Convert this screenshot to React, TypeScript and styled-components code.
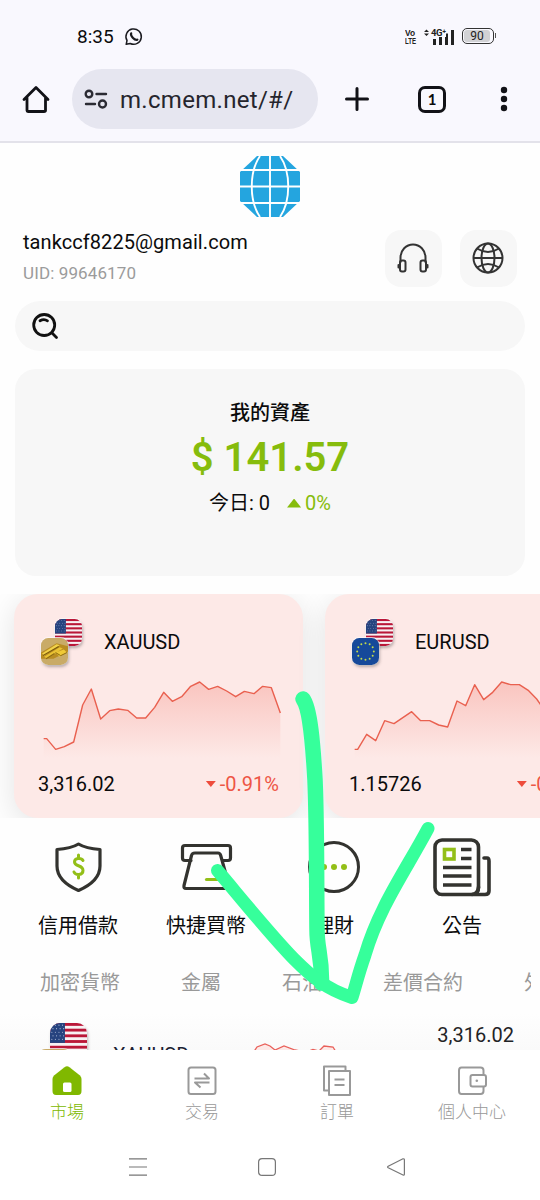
import React from "react";
import styled, { createGlobalStyle } from "styled-components";

const GlobalStyle = createGlobalStyle`
  * { box-sizing: border-box; }
  body {
    margin: 0;
    background: #fefefe;
    font-family: Roboto, "Noto Sans CJK TC", sans-serif;
    color: #0b0b0c;
  }
  svg { display: block; flex: none; overflow: visible; }
`;

const Screen = styled.div`
  position: relative;
  width: 540px;
  height: 1200px;
  overflow: hidden;
  display: flex;
  flex-direction: column;
  background: #fefefe;
`;

const BrowserChrome = styled.header`
  height: 143px;
  flex: none;
  background: #f9f8fe;
  border-bottom: 2px solid #e3e2ea;
`;

const StatusBar = styled.div`
  height: 69px;
  padding: 4px 46px 0 77px;
  display: flex;
  align-items: center;
`;

const Clock = styled.span`
  font-size: 19px;
  line-height: 24px;
  letter-spacing: 0;
  width: 48px;
`;

const StatusIcons = styled.div`
  margin-left: auto;
  display: flex;
  align-items: center;
`;

const Volte = styled.div`
  font: 700 9.5px/8px "Liberation Sans", sans-serif;
  width: 19px;
  text-align: left;
  color: #222;
  span { display: block; transform-origin: left; }
  span:first-child { transform: scaleX(0.88); }
  span:last-child { transform: scaleX(0.64); }
`;

const Signal = styled.div`
  display: flex;
  align-items: flex-start;
  width: 38px;
  position: relative;
`;

const NetworkType = styled.span`
  position: absolute;
  left: 7px;
  top: -1px;
  font: 700 9.5px/9px Roboto, sans-serif;
  background: #f9f8fe;
  color: #222;
  letter-spacing: -0.4px;
`;

const Battery = styled.div`
  width: 32px;
  height: 16px;
  border: 1.4px solid #333;
  border-radius: 5px;
  padding: 1px 3px 1px 1px;
  display: flex;
  position: relative;
  top: -1px;
  &::after {
    content: "";
    position: absolute;
    right: -3px;
    top: 4px;
    width: 1.5px;
    height: 5px;
    background: #555;
  }
`;

const BatteryLevel = styled.span`
  flex: 1;
  border-radius: 3px;
  background: #d2d2d5;
  font-size: 12px;
  line-height: 13px;
  text-align: center;
  color: #222;
`;

const Toolbar = styled.div`
  display: flex;
  align-items: center;
  height: 60px;
  padding-left: 22px;
`;

const AddressPill = styled.div`
  margin-left: 22px;
  width: 246px;
  height: 60px;
  border-radius: 30px;
  background: #e6e6f0;
  display: flex;
  align-items: center;
  padding-left: 12px;
`;

const Address = styled.span`
  margin-left: 12px;
  font-size: 24px;
  line-height: 30px;
  letter-spacing: 0.3px;
  color: #25252d;
  white-space: nowrap;
  padding-top: 2px;
`;

const PlusSlot = styled.div` margin-left: 27px; `;
const TabCount = styled.div`
  margin-left: 49px;
  width: 28px;
  height: 27px;
  border: 3px solid #121217;
  border-radius: 7px;
  display: flex;
  align-items: center;
  justify-content: center;
  font: 700 15px/20px Lato, sans-serif;
`;
const MenuSlot = styled.div` margin-left: 54px; `;

const LogoRow = styled.div`
  height: 87px;
  padding-top: 13px;
  display: flex;
  justify-content: center;
  flex: none;
`;

const Profile = styled.div`
  display: flex;
  height: 57px;
  flex: none;
  padding: 0 23px;
  gap: 18px;
`;

const Identity = styled.div`
  flex: 1;
  min-width: 0;
`;
const Email = styled.div`
  font-size: 20px;
  line-height: 24px;
  letter-spacing: 0.07px;
`;
const Uid = styled.div`
  margin-top: 8px;
  font-size: 17px;
  line-height: 22px;
  letter-spacing: 0.12px;
  color: #9b9b9b;
`;

const RoundButton = styled.button`
  border: 0;
  padding: 0 1px 1px 0;
  width: 57px;
  height: 57px;
  border-radius: 16px;
  background: #f7f7f7;
  display: flex;
  align-items: center;
  justify-content: center;
`;

const SearchBar = styled.div`
  margin: 14px 15px 0;
  height: 50px;
  flex: none;
  border-radius: 25px;
  background: #f7f7f7;
  display: flex;
  align-items: center;
  padding: 0 0 1px 17px;
`;

const AssetCard = styled.section`
  margin: 18px 15px 0;
  height: 207px;
  flex: none;
  border-radius: 21px;
  background: #f7f7f7;
  padding-top: 32px;
  text-align: center;
`;
const AssetTitle = styled.div`
  font-size: 20px;
  line-height: 24px;
  font-weight: 500;
`;
const AssetValue = styled.div`
  font-size: 40px;
  line-height: 50px;
  margin-top: 8px;
  font-weight: 600;
  color: #86bc0c;
`;
const AssetChange = styled.div`
  display: flex;
  justify-content: center;
  align-items: center;
  margin-top: 7px;
  font-size: 20px;
  line-height: 26px;
`;
const Triangle = styled.i<{ $down?: boolean; $w: number }>`
  width: ${(p) => p.$w}px;
  height: ${(p) => (p.$down ? 6 : 9)}px;
  background: ${(p) => (p.$down ? "#ee4c3c" : "#86bc0c")};
  clip-path: ${(p) => (p.$down ? "polygon(0 0, 100% 0, 50% 100%)" : "polygon(50% 0, 100% 100%, 0 100%)")};
`;
const Gain = styled.span`
  display: flex;
  align-items: center;
  gap: 4px;
  margin-left: 17px;
  color: #86bc0c;
`;

const Carousel = styled.div`
  margin-top: 18px;
  height: 224px;
  flex: none;
  display: flex;
  gap: 22px;
  padding-left: 14px;
  overflow: hidden;
`;

const QuoteCard = styled.article`
  width: 289px;
  height: 224px;
  flex: none;
  border-radius: 24px;
  background: #fde9e7;
  box-shadow: 0 6px 30px rgba(0, 0, 0, 0.11);
  padding: 25px 24px 0 24px;
`;
const QuoteHead = styled.div`
  display: flex;
  align-items: center;
  height: 46px;
  padding-left: 3px;
`;
const PairIcon = styled.div<{ $size: number; $drop: number }>`
  position: relative;
  flex: none;
  width: ${(p) => p.$size + 14}px;
  height: ${(p) => p.$size + p.$drop}px;
`;
const Badge = styled.div<{ $size: number; $front?: boolean }>`
  position: absolute;
  ${(p) => (p.$front ? "left: 0; bottom: 0;" : "right: 0; top: 0;")}
  width: ${(p) => p.$size}px;
  height: ${(p) => p.$size}px;
  border-radius: ${(p) => p.$size * 0.27}px;
  overflow: hidden;
  box-shadow: 1px 2px 3px rgba(60, 50, 50, 0.35), 0 0 0 1px rgba(255, 255, 255, 0.65);
`;
const Symbol = styled.span`
  font-size: 20px;
  line-height: 24px;
  margin-left: 22px;
`;
const ChartSlot = styled.div`
  height: 80px;
  margin: 15px 0 0 2px;
`;
const QuoteFoot = styled.div`
  display: flex;
  justify-content: space-between;
  margin-top: 12px;
  font-size: 20px;
  line-height: 24px;
`;
const Loss = styled.span`
  display: flex;
  align-items: center;
  gap: 4px;
  color: #ee5545;
`;

const Shortcuts = styled.div`
  display: grid;
  grid-template-columns: repeat(4, 128px);
  padding: 17px 14px 0;
  height: 122px;
  flex: none;
`;
const Shortcut = styled.div`
  display: flex;
  flex-direction: column;
  align-items: center;
  font-size: 20px;
  line-height: 26px;
`;
const ShortcutIcon = styled.div`
  height: 64px;
  margin-bottom: 14px;
  display: flex;
  align-items: center;
`;

const Categories = styled.div`
  display: flex;
  gap: 61px;
  margin: 0 9px 0 40px;
  padding-top: 29px;
  height: 73px;
  flex: none;
  overflow: hidden;
  color: #999;
  font-size: 20px;
  line-height: 28px;
  white-space: nowrap;
`;

const MarketRow = styled.div`
  height: 37px;
  flex: none;
  overflow: hidden;
  display: flex;
  align-items: flex-start;
  padding: 10px 26px 0 36px;
  background: linear-gradient(#fefefe, #fafafa);
`;
const RowSymbol = styled.span`
  margin: 20px 0 0 26px;
  font-size: 20px;
  line-height: 24px;
  width: 140px;
  color: #1c2233;
`;
const RowPrice = styled.span`
  margin-left: auto;
  font-size: 20px;
  line-height: 24px;
  color: #1f2326;
`;
const Sparkline = styled.div` padding-top: 20px; `;

const BottomNav = styled.nav`
  display: grid;
  grid-template-columns: repeat(4, 135px);
  height: 84px;
  flex: none;
  padding-top: 15px;
  background: #fff;
`;
const NavItem = styled.div<{ $active?: boolean }>`
  display: flex;
  flex-direction: column;
  align-items: center;
  gap: 3px;
  font-size: 17px;
  line-height: 24px;
  font-weight: 300;
  padding-right: 1px;
  color: ${(p) => (p.$active ? "#80b800" : "#999")};
`;

const SystemNav = styled.div`
  flex: 1;
  display: flex;
  align-items: center;
  padding-left: 129px;
  gap: 111px;
  background: #fff;
`;

const ArrowOverlay = styled.div`
  position: absolute;
  inset: 0;
  pointer-events: none;
`;

const UsFlag = () => (
  <svg width="100%" height="100%" viewBox="0 0 26 26" preserveAspectRatio="none">
    <rect width="26" height="26" fill="#f7f1f3" />
    {[0, 4, 8, 12, 16, 20, 24].map((y) => (
      <rect key={y} y={y} width="26" height="2" fill="#ba1738" />
    ))}
    <rect width="10.5" height="14" fill="#26437f" />
    {[1.5, 4, 6.5, 9, 11.5].map((y, r) =>
      [1.5, 4, 6.5, 9].map((x) => (
        <circle key={`${x}-${y}`} cx={x + (r % 2 ? 0.6 : -0.2)} cy={y} r=".4" fill="#aebbd6" />
      ))
    )}
  </svg>
);

const EuFlag = () => (
  <svg width="100%" height="100%" viewBox="0 0 26 26">
    <rect width="26" height="26" fill="#16499a" />
    {Array.from({ length: 12 }, (_, i) => {
      const a = (i * Math.PI) / 6;
      return <circle key={i} cx={13 + 8 * Math.sin(a)} cy={13 - 8 * Math.cos(a)} r=".95" fill="#c4db4a" />;
    })}
  </svg>
);

const GoldBars = () => (
  <svg width="100%" height="100%" viewBox="0 0 26 26">
    <rect width="26" height="26" fill="#c9ab67" />
    <path d="M0 14L15 5l11 3v5L12 20H0z" fill="#b98d22" />
    <path d="M1 15L15 6l3 1L3 17z" fill="#f2d24a" />
    <path d="M3 18l15-9 3 1-15 10z" fill="#e9c233" />
    <path d="M2 16.8l15-8.6" stroke="#7b5a0b" strokeWidth="1" />
    <path d="M14 14l8-3 3 3-7 4z" fill="#efc936" />
    <path d="M14 14l5 3 6-3" stroke="#87650e" strokeWidth=".9" fill="none" />
    <path d="M5 20l8-5" stroke="#8b6913" strokeWidth="1.1" />
  </svg>
);

const Pair = ({ size, drop, front }: { size: number; drop: number; front: React.ReactNode }) => (
  <PairIcon $size={size} $drop={drop}>
    <Badge $size={size}><UsFlag /></Badge>
    <Badge $size={size} $front>{front}</Badge>
  </PairIcon>
);

type Quote = {
  symbol: string;
  price: string;
  change: string;
  points: string;
  originX: number;
  icon: React.ReactNode;
};

const quotes: Quote[] = [
  {
    symbol: "XAUUSD",
    price: "3,316.02",
    change: "-0.91%",
    originX: 120,
    icon: <GoldBars />,
    points:
      "131,461 140,461 167,493 193,485 221,471 248,360 274,312 302,402 329,377 355,372 383,376 410,399 437,399 464,367 491,322 517,349 545,335 572,304 599,291 626,313 653,304 680,318 707,335 733,319 762,326 788,304 814,308 841,384",
  },
  {
    symbol: "EURUSD",
    price: "1.15726",
    change: "-0.12%",
    originX: 183,
    icon: <EuFlag />,
    points:
      "194,493 203,493 230,448 257,467 284,407 312,416 365,380 392,407 419,407 446,420 473,426 501,348 527,362 554,299 581,344 608,322 635,291 662,299 688,299 716,317 740,342 765,378 800,390 850,400 904,420",
  },
];

const PriceChart = ({ points, originX }: { points: string; originX: number }) => {
  const list = points.split(" ");
  const first = list[0].split(",")[0];
  const last = list[list.length - 1].split(",")[0];
  const id = `fade-${originX}`;
  return (
    <svg width="248" height="80" viewBox={`${originX} 285 744 240`}>
      <defs>
        <linearGradient id={id} x1="0" y1="0" x2="0" y2="1">
          <stop offset="0" stopColor="#ef5848" stopOpacity=".25" />
          <stop offset="1" stopColor="#ef5848" stopOpacity="0" />
        </linearGradient>
      </defs>
      <polygon points={`${first},520 ${points} ${last},520`} fill={`url(#${id})`} />
      <polyline points={points} fill="none" stroke="#e9604f" strokeWidth="4.2" strokeLinejoin="round" />
    </svg>
  );
};

const GlobeLogo = () => (
  <svg width="60" height="61" viewBox="0 0 60 61">
    <path d="M17 0H43L60 16V45L43 61H17L0 45V16Z" fill="#24a5df" />
    <g fill="none" stroke="#fff" strokeWidth="1.9">
      <path d="M0 14H60M0 30.5H60M0 47H60M30 0V61" />
      <path d="M20 0C9 16 9 45 20 61M40 0C51 16 51 45 40 61" />
    </g>
  </svg>
);

const dark = "#33332f";
const lime = "#93bf18";

const ShieldIcon = () => (
  <svg width="46" height="50" viewBox="0 0 46 50" fill="none" strokeLinecap="round" strokeLinejoin="round">
    <path d="M23.500 2C17 6 10 7 2 7.500V24C2 36 11 43 23.500 48.500C36 43 45 36 45 24V7.500C37 7 30 6 23.500 2Z" stroke={dark} strokeWidth="3.200" />
    <path d="M28 18.500C26.500 15.800 19.500 15.500 19.500 20C19.500 25 28 22.500 28 28.500C28 33.500 20.500 33.500 19 30M23.500 13V16M23.500 33V36" stroke={lime} strokeWidth="3" />
  </svg>
);

const CashIcon = () => (
  <svg width="50" height="46" viewBox="0 0 50 46" fill="none" strokeLinecap="round" strokeLinejoin="round" stroke={dark} strokeWidth="3.200">
    <path d="M10 16.500H4Q1.500 16.500 1.500 14V4Q1.500 1.500 4 1.500H47Q49.500 1.500 49.500 4V14Q49.500 16.500 47 16.500H42" />
    <path d="M14 9H37Q39 9 39.700 11.500L48 41.500Q48.500 44.500 46 44.500H5Q2.500 44.500 3 41.500L10.500 11.500Q11 9 14 9Z" />
    <path d="M25.500 35.500H37" stroke={lime} />
  </svg>
);

const WealthIcon = () => (
  <svg width="52" height="52" viewBox="0 0 52 52">
    <circle cx="26" cy="26" r="24.500" fill="none" stroke={dark} strokeWidth="3" />
    {[16, 26, 36].map((x) => <circle key={x} cx={x} cy="26" r="3" fill={lime} />)}
  </svg>
);

const NewsIcon = () => (
  <svg width="58" height="58" viewBox="0 0 58 58" fill="none" stroke={dark} strokeWidth="3.600" strokeLinecap="round" strokeLinejoin="round">
    <rect x="2" y="2" width="43.500" height="54.500" rx="7" />
    <path d="M51 20H54Q56 20 56 23V53Q56 56.500 52 56.500H39Q45.500 56.500 45.500 49" />
    <rect x="11.500" y="11.500" width="9.500" height="9.500" stroke={lime} strokeLinejoin="miter" />
    <path d="M28 11.500H38.500M28 20.500H38.500M10 29.500H38.500M10 38H38.500M10 47H38.500" strokeLinecap="butt" />
  </svg>
);

const shortcuts = [
  { label: "信用借款", icon: <ShieldIcon /> },
  { label: "快捷買幣", icon: <CashIcon /> },
  { label: "理財", icon: <WealthIcon /> },
  { label: "公告", icon: <NewsIcon /> },
];

const categories = ["加密貨幣", "金屬", "石油", "差價合約", "外匯"];

const navItems = [
  {
    label: "市場",
    icon: (
      <svg width="30" height="32" viewBox="0 0 30 32">
        <path d="M12.500 2.200Q15 .3 17.500 2.200L28 10.500Q29.500 12 29.500 14V26Q29.500 30 26 30H4Q.5 30 .5 26V14Q.5 12 2 10.500Z" fill="#80b800" />
        <rect x="11" y="17.500" width="8.500" height="9.500" rx="1.500" fill="#fff" />
      </svg>
    ),
  },
  {
    label: "交易",
    icon: (
      <svg width="30" height="32" viewBox="0 0 30 32" fill="none" stroke="#999" strokeWidth="2" strokeLinejoin="round">
        <rect x="1.500" y="2.500" width="27" height="26.500" rx="2.500" />
        <path d="M7.500 13.500H22L17 8.500M22.500 17.500H8L13.500 22.500" />
      </svg>
    ),
  },
  {
    label: "訂單",
    icon: (
      <svg width="30" height="32" viewBox="0 0 30 32" fill="none" stroke="#999" strokeWidth="2" strokeLinejoin="round">
        <path d="M6.500 25.500H2V1.500H23.500V6" />
        <rect x="7" y="6" width="21" height="24" />
        <path d="M12.500 14.500H22.500M12.500 20H22.500" />
      </svg>
    ),
  },
  {
    label: "個人中心",
    icon: (
      <svg width="30" height="32" viewBox="0 0 30 32" fill="none" stroke="#999" strokeWidth="2" strokeLinejoin="round">
        <path d="M26.500 10V5.500Q26.500 2.500 23.500 2.500H4.500Q2 2.500 2 5.500V26Q2 29 4.500 29H23.500Q26.500 29 26.500 26V22" />
        <rect x="13.500" y="10" width="15.500" height="11.500" rx="2" />
        <circle cx="19.800" cy="15.700" r="1.300" fill="#999" stroke="none" />
      </svg>
    ),
  },
];

export default function App() {
  return (
    <>
      <GlobalStyle />
      <Screen>
        <BrowserChrome>
          <StatusBar>
            <Clock>8:35</Clock>
            <svg width="18" height="18" viewBox="0 0 18 18" fill="none" stroke="#1b1b20">
              <path d="M1.200 16.300L2 12.500A7.700 7.700 0 1 1 5.200 15.500Z" strokeWidth="1.500" strokeLinejoin="round" />
              <path d="M6.200 5.300C5 7.500 9.500 12.700 12.400 11.700" strokeWidth="2.200" strokeLinecap="round" />
            </svg>
            <StatusIcons>
              <Volte><span>Vo</span><span>LTE</span></Volte>
              <Signal>
                <svg width="31" height="16" viewBox="0 0 31 16" fill="#222">
                  <path d="M0 3L2.500 .5L5 3ZM0 4.500H5L2.500 7Z" />
                  <rect x="9" y="10" width="3" height="6" />
                  <rect x="15" y="8" width="3" height="8" />
                  <rect x="21" y="4.500" width="3" height="11.500" />
                  <rect x="27" y="1" width="3" height="15" />
                </svg>
                <NetworkType>4G⁺</NetworkType>
              </Signal>
              <Battery><BatteryLevel>90</BatteryLevel></Battery>
            </StatusIcons>
          </StatusBar>
          <Toolbar>
            <svg width="28" height="28" viewBox="0 0 28 28" fill="none" stroke="#121217" strokeWidth="2.800" strokeLinecap="round" strokeLinejoin="round">
              <path d="M2 14.500L14 2.500L26 14.500M5 12.500V25.500Q5 26.500 6 26.500H22Q23.500 26.500 23.500 25.500V12.500" />
            </svg>
            <AddressPill>
              <svg width="24" height="20" viewBox="0 0 24 20" fill="none" stroke="#2b2b33" strokeWidth="2.400" strokeLinecap="round">
                <circle cx="5" cy="5" r="3.300" />
                <path d="M12.500 5H22M2 15H11" />
                <circle cx="18.500" cy="15" r="3.500" />
              </svg>
              <Address>m.cmem.net/#/</Address>
            </AddressPill>
            <PlusSlot>
              <svg width="24" height="24" viewBox="0 0 24 24" stroke="#121217" strokeWidth="3" strokeLinecap="round">
                <path d="M12 1.500V22.500M1.500 12H22.500" />
              </svg>
            </PlusSlot>
            <TabCount>1</TabCount>
            <MenuSlot>
              <svg width="8" height="26" viewBox="0 0 8 26" fill="#121217">
                <circle cx="4" cy="4" r="3.200" />
                <circle cx="4" cy="13" r="3.200" />
                <circle cx="4" cy="22" r="3.200" />
              </svg>
            </MenuSlot>
          </Toolbar>
        </BrowserChrome>

        <LogoRow><GlobeLogo /></LogoRow>

        <Profile>
          <Identity>
            <Email>tankccf8225@gmail.com</Email>
            <Uid>UID: 99646170</Uid>
          </Identity>
          <RoundButton aria-label="Support">
            <svg width="32" height="30" viewBox="0 0 32 30" fill="none" stroke="#333" strokeWidth="2" strokeLinecap="round">
              <path d="M3.500 19V14.500A12.500 13 0 0 1 28.500 14.500V19" />
              <rect x="3" y="17.500" width="5.500" height="11" rx="2" />
              <rect x="23.500" y="17.500" width="5.500" height="11" rx="2" />
              <path d="M1.500 22V24.500M30.500 22V24.500" />
            </svg>
          </RoundButton>
          <RoundButton aria-label="Language">
            <svg width="32" height="32" viewBox="0 0 32 32" fill="none" stroke="#333" strokeWidth="2">
              <circle cx="16" cy="16" r="14.500" />
              <ellipse cx="16" cy="16" rx="6.500" ry="14.500" />
              <path d="M1.500 16H30.500M5 6.500Q16 13.500 27 6.500M5 25.500Q16 18.500 27 25.500" />
            </svg>
          </RoundButton>
        </Profile>

        <SearchBar>
          <svg width="28" height="28" viewBox="0 0 28 28" fill="none" stroke="#111" strokeWidth="2.800" strokeLinecap="round">
            <circle cx="12.200" cy="13" r="10.500" />
            <path d="M19.800 20.800L24.500 25.500M8 8.800Q12 6.300 15.500 8.800" />
          </svg>
        </SearchBar>

        <AssetCard>
          <AssetTitle>我的資產</AssetTitle>
          <AssetValue>$ 141.57</AssetValue>
          <AssetChange>
            <span>今日: 0</span>
            <Gain><Triangle $w={14} />0%</Gain>
          </AssetChange>
        </AssetCard>

        <Carousel>
          {quotes.map((q) => (
            <QuoteCard key={q.symbol}>
              <QuoteHead>
                <Pair size={27} drop={19} front={q.icon} />
                <Symbol>{q.symbol}</Symbol>
              </QuoteHead>
              <ChartSlot><PriceChart points={q.points} originX={q.originX} /></ChartSlot>
              <QuoteFoot>
                <span>{q.price}</span>
                <Loss><Triangle $down $w={10} />{q.change}</Loss>
              </QuoteFoot>
            </QuoteCard>
          ))}
        </Carousel>

        <Shortcuts>
          {shortcuts.map((s) => (
            <Shortcut key={s.label}>
              <ShortcutIcon>{s.icon}</ShortcutIcon>
              {s.label}
            </Shortcut>
          ))}
        </Shortcuts>

        <Categories>
          {categories.map((c) => <span key={c}>{c}</span>)}
        </Categories>

        <MarketRow>
          <Pair size={37} drop={26} front={<GoldBars />} />
          <RowSymbol>XAUUSD</RowSymbol>
          <Sparkline>
            <svg width="90" height="20" viewBox="0 0 90 20">
              <path d="M0 10L4 4L12 1L17 3L22 7L31 3L42 7L53 9L60 6.500L66 8L71 3L80 4L86 14V20H0Z" fill="#fde9e7" />
              <path d="M0 10L4 4L12 1L17 3L22 7L31 3L42 7L53 9L60 6.500L66 8L71 3L80 4L86 14" fill="none" stroke="#e9605a" strokeWidth="1.300" />
            </svg>
          </Sparkline>
          <RowPrice>3,316.02</RowPrice>
        </MarketRow>

        <BottomNav>
          {navItems.map((n, i) => (
            <NavItem key={n.label} $active={i === 0}>
              {n.icon}
              {n.label}
            </NavItem>
          ))}
        </BottomNav>

        <SystemNav>
          <svg width="18" height="18" viewBox="0 0 18 18" stroke="#777" strokeWidth="1.200">
            <path d="M0 .8H18M0 9H18M0 17.200H18" />
          </svg>
          <svg width="18" height="18" viewBox="0 0 18 18" fill="none" stroke="#777" strokeWidth="1.200">
            <rect x=".6" y=".6" width="16.800" height="16.800" rx="3.500" />
          </svg>
          <svg width="18" height="18" viewBox="0 0 18 18" fill="none" stroke="#777" strokeWidth="1.200" strokeLinejoin="round">
            <path d="M1.200 8.200L16 .8Q17.400 .5 17.400 2V16Q17.400 17.500 16 17L1.200 9.800Q0 9 1.200 8.200Z" />
          </svg>
        </SystemNav>

        <ArrowOverlay>
          <svg width="540" height="1200" viewBox="0 0 540 1200" fill="none" stroke="#36ff9b" strokeLinecap="round" strokeLinejoin="round">
            <path d="M303 699C310 708 313 745 315 780C317 825 316.500 890 317 930C317 950 322 955 321.500 983" strokeWidth="15.500" />
            <path d="M217.500 870.500C240 897 268 932 294 959C310 975 325 989 352 997.500C356 985 358 975 365 955C379 907 406 870 428 828.500" strokeWidth="13" />
          </svg>
        </ArrowOverlay>
      </Screen>
    </>
  );
}
